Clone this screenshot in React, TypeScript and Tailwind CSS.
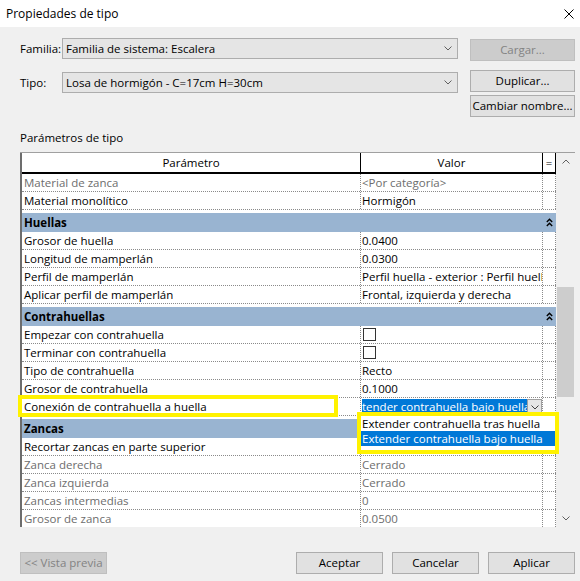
import React from "react";

type Row = { p: string; v?: string; dim?: boolean; kind?: "check" | "select" };
type Group = { title?: string; rows: Row[] };

const groups: Group[] = [
  {
    rows: [
      { p: "Material de zanca", v: "<Por categoría>", dim: true },
      { p: "Material monolítico", v: "Hormigón" },
    ],
  },
  {
    title: "Huellas",
    rows: [
      { p: "Grosor de huella", v: "0.0400" },
      { p: "Longitud de mamperlán", v: "0.0300" },
      { p: "Perfil de mamperlán", v: "Perfil huella - exterior : Perfil huella" },
      { p: "Aplicar perfil de mamperlán", v: "Frontal, izquierda y derecha" },
    ],
  },
  {
    title: "Contrahuellas",
    rows: [
      { p: "Empezar con contrahuella", kind: "check" },
      { p: "Terminar con contrahuella", kind: "check" },
      { p: "Tipo de contrahuella", v: "Recto" },
      { p: "Grosor de contrahuella", v: "0.1000" },
      { p: "Conexión de contrahuella a huella", kind: "select" },
    ],
  },
  {
    title: "Zancas",
    rows: [
      { p: "Recortar zancas en parte superior", v: "" },
      { p: "Zanca derecha", v: "Cerrado", dim: true },
      { p: "Zanca izquierda", v: "Cerrado", dim: true },
      { p: "Zancas intermedias", v: "0", dim: true },
      { p: "Grosor de zanca", v: "0.0500", dim: true },
    ],
  },
];

function Chevron({ up = false, className = "" }: { up?: boolean; className?: string }) {
  return (
    <svg width="8" height="5" viewBox="0 0 8 5" className={className}>
      <path
        d={up ? "M0.5 4.5 L4 1 L7.5 4.5" : "M0.5 0.5 L4 4 L7.5 0.5"}
        fill="none"
        stroke="currentColor"
        strokeWidth="1"
      />
    </svg>
  );
}

function DoubleUp() {
  return (
    <svg width="7" height="9" viewBox="0 0 7 9">
      <path d="M0.8 4 L3.5 1.3 L6.2 4 M0.8 8 L3.5 5.3 L6.2 8" fill="none" stroke="#000" strokeWidth="1.4" />
    </svg>
  );
}

function Combo({ text }: { text: string }) {
  return (
    <div className="w-[396px] h-[21px] border border-[#adadad] bg-[#e5e5e5] flex items-center justify-between pl-[3px] pr-[5px]">
      <span>{text}</span>
      <Chevron className="text-[#606060]" />
    </div>
  );
}

function Btn({ label, disabled = false, w = "w-[105px]" }: { label: string; disabled?: boolean; w?: string }) {
  return (
    <div
      className={`${w} h-[22px] flex items-center justify-center border ${
        disabled ? "bg-[#cccccc] border-[#bfbfbf] text-[#838383]" : "bg-[#e1e1e1] border-[#adadad] text-black"
      }`}
    >
      {label}
    </div>
  );
}

function DataRow({ row }: { row: Row }) {
  const tone = row.dim ? "text-[#6d6d6d]" : "text-black";
  return (
    <div className="flex h-[18px] border-b border-dotted border-[#8a8a8a]">
      <div className={`w-[339px] pl-[2px] flex items-center border-r border-dotted border-[#8a8a8a] whitespace-nowrap overflow-hidden ${tone}`}>
        {row.p}
      </div>
      <div className={`w-[182px] flex items-center border-r border-dotted border-[#8a8a8a] whitespace-nowrap overflow-hidden ${tone}`}>
        {row.kind === "check" && <div className="ml-[2px] w-[13px] h-[13px] border border-[#333333] bg-white" />}
        {row.kind === "select" && (
          <div className="flex h-full w-full pt-[1px] pl-[1px]">
            <div className="flex-1 bg-[#0078d7] text-white flex items-center overflow-hidden whitespace-nowrap">
              tender contrahuella bajo huella
            </div>
            <div className="w-[15px] border border-[#a0a0a0] bg-[#e6e6e6] flex items-center justify-center text-[#404040]">
              <Chevron />
            </div>
          </div>
        )}
        {!row.kind && <span className="pl-[1px]">{row.v}</span>}
      </div>
      <div className="w-[13px] border-r border-dotted border-[#8a8a8a]" />
    </div>
  );
}

export default function App() {
  return (
    <div className="relative w-[580px] h-[581px] overflow-hidden bg-[#f0f0f0] font-['Open_Sans',sans-serif] text-[11.5px] text-black">
      <div className="h-[27px] bg-white flex items-center justify-between pl-[6px] pr-[4px]">
        <span className="text-[12px]">Propiedades de tipo</span>
        <svg width="10" height="10" viewBox="0 0 10 10" className="mr-[2px]">
          <path d="M0.5 0.5 L9.5 9.5 M9.5 0.5 L0.5 9.5" stroke="#000" strokeWidth="1" />
        </svg>
      </div>

      <div className="pl-[20px] pr-[5px]">
        <div className="mt-[11px] flex items-start">
          <div className="w-[42px] leading-[21px]">Familia:</div>
          <Combo text="Familia de sistema: Escalera" />
          <div className="ml-[12px] mt-[1px]">
            <Btn label="Cargar..." disabled />
          </div>
        </div>

        <div className="mt-[9px] flex items-start h-[22px]">
          <div className="w-[42px] leading-[21px] mt-[2px]">Tipo:</div>
          <div className="mt-[2px]">
            <Combo text="Losa de hormigón - C=17cm H=30cm" />
          </div>
          <div className="ml-[12px]">
            <Btn label="Duplicar..." />
          </div>
        </div>

        <div className="mt-[3px] flex justify-end">
          <Btn label="Cambiar nombre..." />
        </div>

        <div className="mt-[13px] h-[16px] leading-[16px]">Parámetros de tipo</div>

        <div className="mt-[6px] flex h-[375px] border-t border-[#a0a0a0]">
          <div className="w-[536px] bg-white border-l-2 border-[#6d6d6d] overflow-hidden">
            <div className="flex h-[21px] border-b-2 border-black">
              <div className="w-[339px] flex items-center justify-center border-r border-black">Parámetro</div>
              <div className="w-[182px] flex items-center justify-center border-r border-black">Valor</div>
              <div className="w-[13px] flex items-center justify-center border-r border-black">=</div>
            </div>
            {groups.map((g, gi) => (
              <div key={gi}>
                {g.title && (
                  <>
                    <div className="h-[3px]" />
                    <div className="flex h-[19px] bg-[#99b4d1]">
                      <div className="w-[521px] pl-[2px] flex items-center font-bold">{g.title}</div>
                      <div className="w-[13px] flex items-center justify-center">
                        <DoubleUp />
                      </div>
                    </div>
                  </>
                )}
                {g.rows.map((r) => (
                  <DataRow key={r.p} row={r} />
                ))}
              </div>
            ))}
          </div>

          <div className="w-[19px] flex flex-col bg-[#f0f0f0]">
            <div className="h-[17px] flex items-center justify-center text-[#606060]">
              <Chevron up />
            </div>
            <div className="flex-1">
              <div className="mt-[117px] mx-[1px] h-[110px] bg-[#cdcdcd]" />
            </div>
            <div className="h-[17px] flex items-center justify-center text-[#606060]">
              <Chevron />
            </div>
          </div>
        </div>

        <div className="mt-[25px] flex items-center">
          <Btn label="<< Vista previa" disabled w="w-[87px]" />
          <div className="ml-auto flex gap-[9px]">
            <Btn label="Aceptar" w="w-[87px]" />
            <Btn label="Cancelar" w="w-[87px]" />
            <Btn label="Aplicar" w="w-[87px]" />
          </div>
        </div>
      </div>

      {/* annotation around the parameter name */}
      <div className="absolute left-[18px] top-[395px] w-[320px] h-[22px] border-4 border-[#fff200]" />

      {/* open dropdown list, with its annotation frame */}
      <div className="absolute left-[357px] top-[412px] w-[202px] h-[42px] border-4 border-[#fff200] bg-white">
        <div className="pt-[1px] whitespace-nowrap">
          <div className="h-[14px] flex items-center pl-[1px]">Extender contrahuella tras huella</div>
          <div className="h-[15px] flex items-center pl-[1px] bg-[#0078d7] text-white">Extender contrahuella bajo huella</div>
        </div>
      </div>
    </div>
  );
}
